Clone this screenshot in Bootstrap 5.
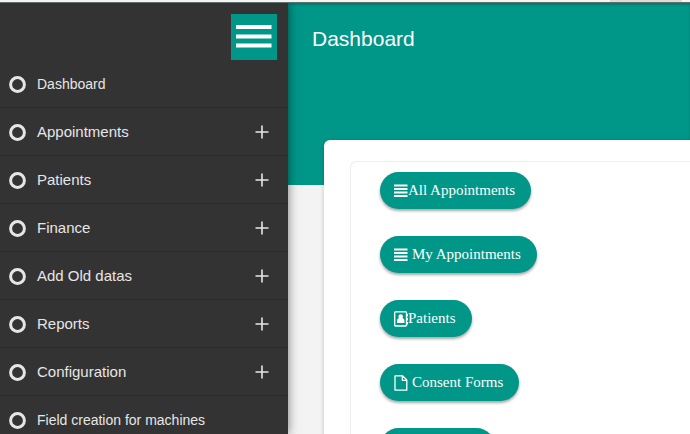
<!DOCTYPE html>
<html lang="en">
<head>
<meta charset="utf-8">
<meta name="viewport" content="width=device-width, initial-scale=1">
<title>Dashboard</title>
<link href="https://cdn.jsdelivr.net/npm/bootstrap@5.3.0/dist/css/bootstrap.min.css" rel="stylesheet">
<style>
  :root { --teal: #009688; --dark: #333; }
  body { font-family: "Liberation Sans", Arial, sans-serif; background: #f3f3f3; }
  .top-strip { height: 2px; background: #f4f6f6; }
  .top-strip span { width: 72px; margin-right: 8px; background: #dadcdc; }
  .shell { border-top: 1px solid #5f6f6d; }
  .sidebar { width: 288px; background: var(--dark); box-shadow: 0 0 10px rgba(0,0,0,.5); z-index: 2; }
  .side-head { height: 57px; padding: 11px 11px 0 0; }
  .menu-toggle { width: 46px; height: 46px; background: var(--teal); }
  .side-link { height: 48px; padding: 1px 19px 0 9px; gap: 11px; color: #e6e6e6; font-size: 14px; border-bottom: 1px solid #2b2b2b; }
  .side-group { font-size: 15px; }
  .page-head { height: 182px; padding: 22px 24px; background: var(--teal); box-shadow: inset 0 2px 2px rgba(0,0,0,.18); }
  .page-head h1 { font-size: 21px; line-height: 27px; }
  .panel { margin: -45px 0 0 36px; padding: 21px 0 0 26px; border-radius: 6px 0 0 0; box-shadow: 0 1px 4px rgba(0,0,0,.2); }
  .panel-inner { padding: 10px 0 0 29px; border: solid #ededed; border-width: 1px 0 0 1px; border-radius: 6px 0 0 0; gap: 27px; }
  .pill { height: 37px; padding: 0 16px 0 14px; background: var(--teal); font: 15px/37px "Liberation Serif", "Times New Roman", serif; box-shadow: 0 2px 3px rgba(0,0,0,.35); }
  .pill:hover, .menu-toggle:hover { background: #00877a; }
  .pill svg { width: 14px; height: 16px; }
</style>
</head>
<body class="vh-100 overflow-hidden d-flex flex-column">
<svg class="d-none" aria-hidden="true">
  <symbol id="ring" viewBox="0 0 17 17"><circle cx="8.500" cy="8.500" r="6.900" fill="none" stroke="currentColor" stroke-width="3"/></symbol>
  <symbol id="plus" viewBox="0 0 14 14"><path d="M7 0.500V13.500M0.500 7H13.500" stroke="currentColor" stroke-width="1.600"/></symbol>
  <symbol id="bars" viewBox="0 0 14 16"><path d="M0 2.500H13.500M0 6H13.500M0 9.500H13.500M0 13H13.500" stroke="currentColor" stroke-width="2"/></symbol>
  <symbol id="file" viewBox="0 0 14 16"><path d="M1 .8H8.500L12.800 5V15.200H1ZM8.300 .8V5.300H12.800" fill="none" stroke="currentColor" stroke-width="1.300" stroke-linejoin="round"/></symbol>
  <symbol id="contact" viewBox="0 0 14 16"><rect x=".7" y=".8" width="11.800" height="14.200" rx=".8" fill="none" stroke="currentColor" stroke-width="1.300"/><path d="M13.500 3V5.500M13.500 7V9.500M13.500 11V13.500" stroke="currentColor"/><circle cx="6.700" cy="5.600" r="2.300" fill="currentColor"/><path d="M3 12V9.500Q3 7.500 5 7H8.400Q10.400 7.500 10.400 9.500V12Z" fill="currentColor"/></symbol>
</svg>
<div class="top-strip d-flex justify-content-end flex-shrink-0"><span></span></div>
<div class="shell d-flex flex-grow-1 overflow-hidden">
  <nav class="sidebar flex-shrink-0 position-relative" aria-label="Main menu">
    <div class="side-head d-flex justify-content-end">
      <button type="button" class="menu-toggle btn rounded-0 border-0 p-0 flex-shrink-0 d-flex" aria-label="Toggle menu">
        <svg width="46" height="46" viewBox="0 0 46 46" aria-hidden="true"><path d="M5 13H40.500M5 22.500H40.500M5 31.500H40.500" stroke="#fff" stroke-width="4"/></svg>
      </button>
    </div>
    <ul class="list-unstyled mb-0">
      <li><a href="#" class="side-link d-flex align-items-center text-decoration-none"><svg width="17" height="17"><use href="#ring"/></svg>Dashboard</a></li>
      <li><a href="#" class="side-link side-group d-flex align-items-center text-decoration-none"><svg width="17" height="17"><use href="#ring"/></svg>Appointments<svg class="ms-auto" width="14" height="14"><use href="#plus"/></svg></a></li>
      <li><a href="#" class="side-link side-group d-flex align-items-center text-decoration-none"><svg width="17" height="17"><use href="#ring"/></svg>Patients<svg class="ms-auto" width="14" height="14"><use href="#plus"/></svg></a></li>
      <li><a href="#" class="side-link side-group d-flex align-items-center text-decoration-none"><svg width="17" height="17"><use href="#ring"/></svg>Finance<svg class="ms-auto" width="14" height="14"><use href="#plus"/></svg></a></li>
      <li><a href="#" class="side-link side-group d-flex align-items-center text-decoration-none"><svg width="17" height="17"><use href="#ring"/></svg>Add Old datas<svg class="ms-auto" width="14" height="14"><use href="#plus"/></svg></a></li>
      <li><a href="#" class="side-link side-group d-flex align-items-center text-decoration-none"><svg width="17" height="17"><use href="#ring"/></svg>Reports<svg class="ms-auto" width="14" height="14"><use href="#plus"/></svg></a></li>
      <li><a href="#" class="side-link side-group d-flex align-items-center text-decoration-none"><svg width="17" height="17"><use href="#ring"/></svg>Configuration<svg class="ms-auto" width="14" height="14"><use href="#plus"/></svg></a></li>
      <li><a href="#" class="side-link d-flex align-items-center text-decoration-none"><svg width="17" height="17"><use href="#ring"/></svg>Field creation for machines</a></li>
    </ul>
  </nav>
  <main class="flex-grow-1 d-flex flex-column">
    <header class="page-head flex-shrink-0 text-white"><h1 class="fw-normal m-0">Dashboard</h1></header>
    <section class="panel bg-white flex-grow-1 position-relative">
      <div class="panel-inner d-flex flex-column align-items-start h-100">
        <button type="button" class="pill btn rounded-pill border-0 text-white d-flex align-items-center flex-shrink-0"><svg aria-hidden="true"><use href="#bars"/></svg>All Appointments</button>
        <button type="button" class="pill btn rounded-pill border-0 text-white d-flex align-items-center gap-1 flex-shrink-0"><svg aria-hidden="true"><use href="#bars"/></svg>My Appointments</button>
        <button type="button" class="pill btn rounded-pill border-0 text-white d-flex align-items-center flex-shrink-0"><svg aria-hidden="true"><use href="#contact"/></svg>Patients</button>
        <button type="button" class="pill btn rounded-pill border-0 text-white d-flex align-items-center gap-1 flex-shrink-0"><svg aria-hidden="true"><use href="#file"/></svg>Consent Forms</button>
        <button type="button" class="pill btn rounded-pill border-0 text-white d-flex align-items-center gap-1 flex-shrink-0"><svg aria-hidden="true"><use href="#file"/></svg>Treatments</button>
      </div>
    </section>
  </main>
</div>
<script src="https://cdn.jsdelivr.net/npm/bootstrap@5.3.0/dist/js/bootstrap.bundle.min.js"></script>
</body>
</html>
